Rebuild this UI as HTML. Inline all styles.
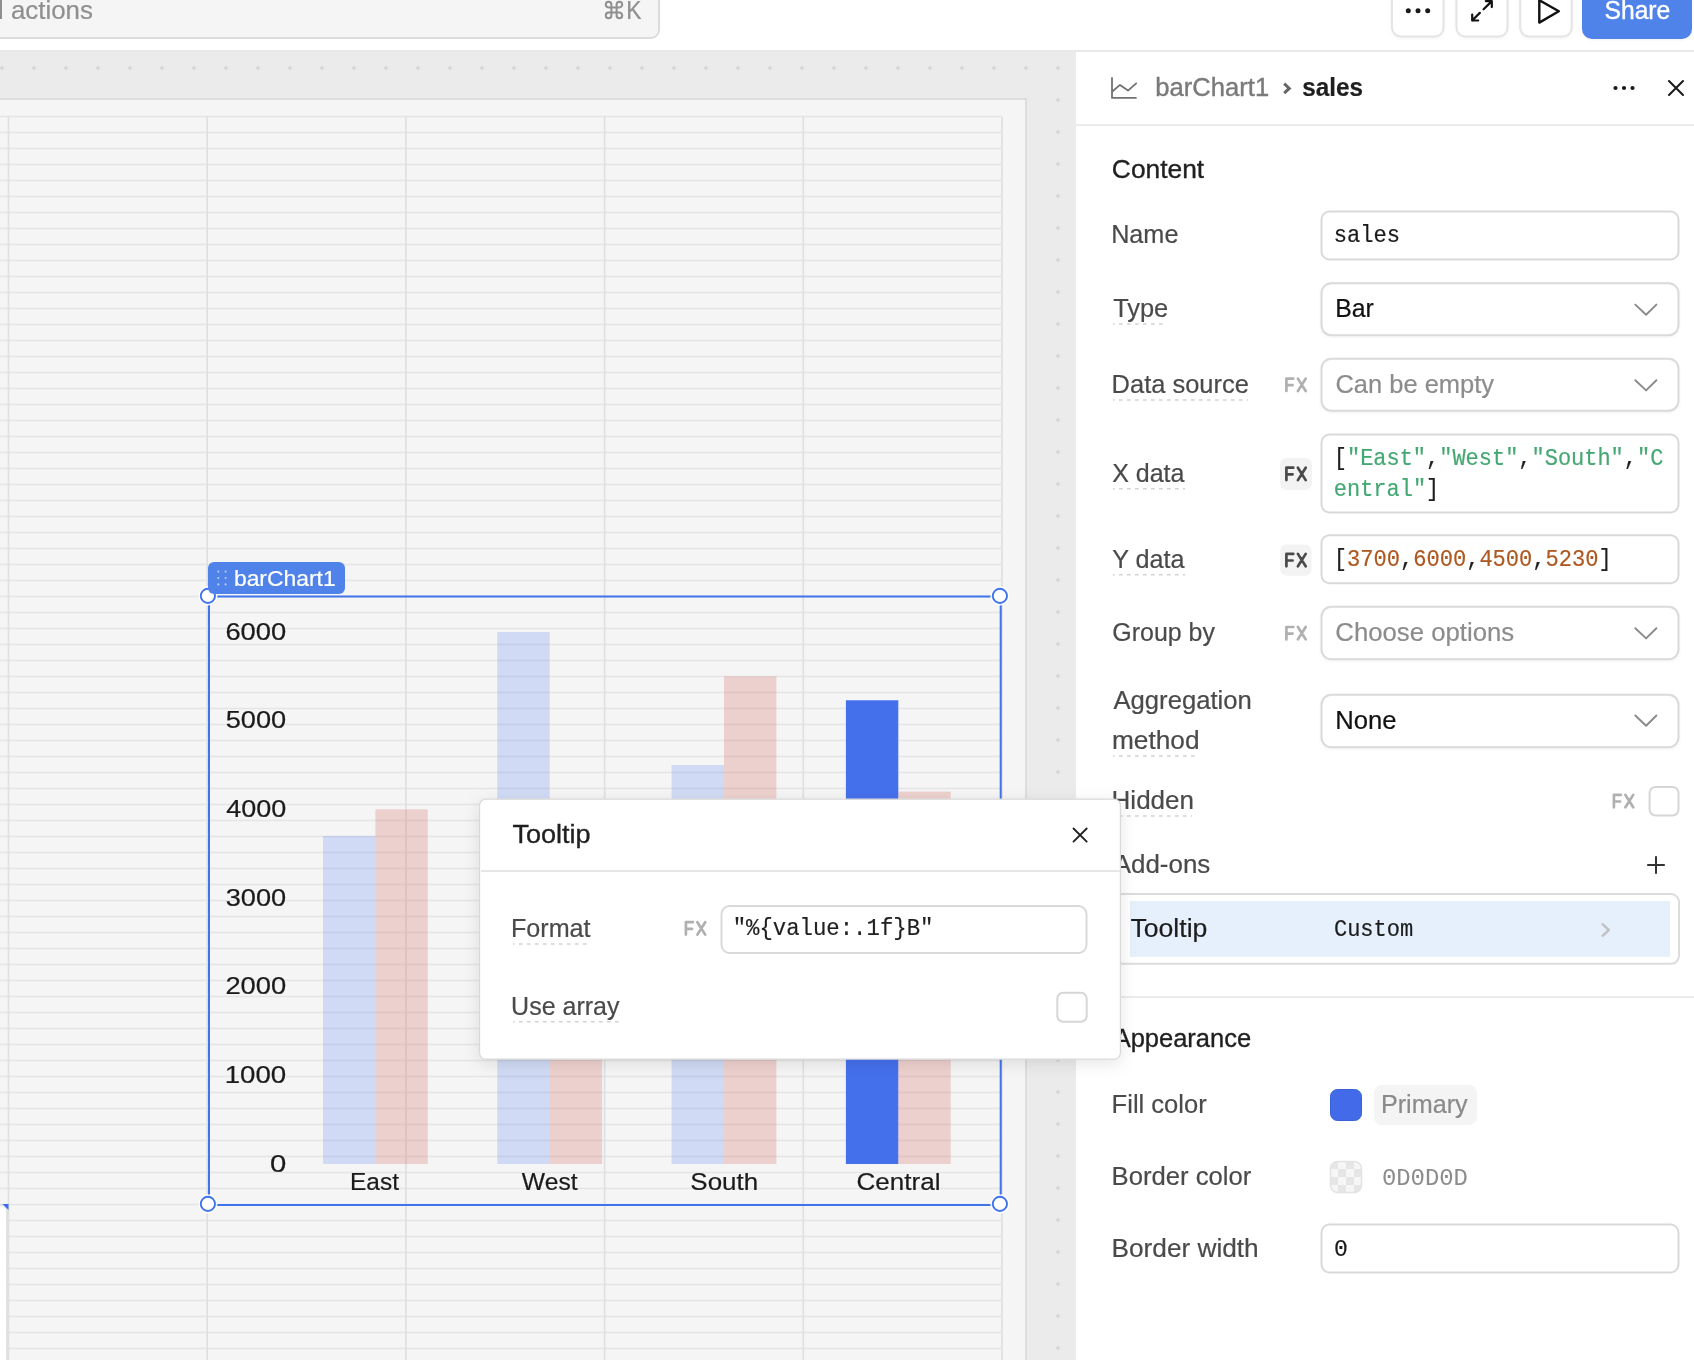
<!DOCTYPE html>
<html><head><meta charset="utf-8"><title>barChart1</title>
<style>html,body{margin:0;padding:0;width:1694px;height:1360px;overflow:hidden;background:#ebebeb;font-family:"Liberation Sans",sans-serif}svg{display:block;will-change:transform}</style>
</head><body>
<svg width="1694" height="1360" viewBox="0 0 1694 1360">
<defs>
<pattern id="dots" x="0" y="0" width="32" height="32" patternUnits="userSpaceOnUse">
<circle cx="2" cy="4" r="2.1" fill="#d9d9d9"/></pattern>
<filter id="pshadow" x="-10%" y="-15%" width="120%" height="135%">
<feDropShadow dx="0" dy="4" stdDeviation="8" flood-color="#000" flood-opacity="0.10"/></filter>
<filter id="bshadow" x="-20%" y="-20%" width="140%" height="150%">
<feDropShadow dx="0" dy="1" stdDeviation="1" flood-color="#000" flood-opacity="0.06"/></filter>
<pattern id="checker" x="1330" y="1161" width="16" height="16" patternUnits="userSpaceOnUse">
<rect width="16" height="16" fill="#f6f6f6"/><rect width="8" height="8" fill="#e6e6e6"/><rect x="8" y="8" width="8" height="8" fill="#e6e6e6"/></pattern>
</defs>
<rect x="0.00" y="0.00" width="1694.00" height="1360.00" rx="0.00" fill="#ebebeb"/>
<rect x="0.00" y="52.00" width="1076.00" height="47.00" rx="0.00" fill="url(#dots)"/>
<rect x="1028.00" y="99.00" width="48.00" height="1261.00" rx="0.00" fill="url(#dots)"/>
<rect x="-10.00" y="99.00" width="1036.00" height="1300.00" rx="0.00" fill="#f5f5f5" stroke="#dddddd" stroke-width="2"/>
<path d="M0 116.50H1002M0 132.50H1002M0 148.50H1002M0 164.50H1002M0 180.50H1002M0 196.50H1002M0 212.50H1002M0 228.50H1002M0 244.50H1002M0 260.50H1002M0 276.50H1002M0 292.50H1002M0 308.50H1002M0 324.50H1002M0 340.50H1002M0 356.50H1002M0 372.50H1002M0 388.50H1002M0 404.50H1002M0 420.50H1002M0 436.50H1002M0 452.50H1002M0 468.50H1002M0 484.50H1002M0 500.50H1002M0 516.50H1002M0 532.50H1002M0 548.50H1002M0 564.50H1002M0 580.50H1002M0 596.50H1002M0 612.50H1002M0 628.50H1002M0 644.50H1002M0 660.50H1002M0 676.50H1002M0 692.50H1002M0 708.50H1002M0 724.50H1002M0 740.50H1002M0 756.50H1002M0 772.50H1002M0 788.50H1002M0 804.50H1002M0 820.50H1002M0 836.50H1002M0 852.50H1002M0 868.50H1002M0 884.50H1002M0 900.50H1002M0 916.50H1002M0 932.50H1002M0 948.50H1002M0 964.50H1002M0 980.50H1002M0 996.50H1002M0 1012.50H1002M0 1028.50H1002M0 1044.50H1002M0 1060.50H1002M0 1076.50H1002M0 1092.50H1002M0 1108.50H1002M0 1124.50H1002M0 1140.50H1002M0 1156.50H1002M0 1172.50H1002M0 1188.50H1002M0 1204.50H1002M0 1220.50H1002M0 1236.50H1002M0 1252.50H1002M0 1268.50H1002M0 1284.50H1002M0 1300.50H1002M0 1316.50H1002M0 1332.50H1002M0 1348.50H1002" stroke="#e5e5e5" stroke-width="1.6" fill="none"/>
<path d="M8.50 116.5V1360M207.20 116.5V1360M405.90 116.5V1360M604.60 116.5V1360M803.30 116.5V1360M1002.00 116.5V1360" stroke="#dfdfdf" stroke-width="1.6" fill="none"/>
<rect x="-20.00" y="1205.00" width="27.00" height="200.00" rx="6.00" fill="#fff" stroke="#dcdcdc" stroke-width="1.6"/>
<path d="M2.5 1204 L8.5 1204 L8.5 1210 Z" fill="#3c6cf0"/>
<rect x="323.00" y="835.93" width="52.40" height="328.07" rx="0.00" fill="#3c6ef0" fill-opacity="0.2"/>
<rect x="375.40" y="809.33" width="52.40" height="354.67" rx="0.00" fill="#d5655a" fill-opacity="0.25"/>
<rect x="497.30" y="632.00" width="52.40" height="532.00" rx="0.00" fill="#3c6ef0" fill-opacity="0.2"/>
<rect x="549.70" y="942.33" width="52.40" height="221.67" rx="0.00" fill="#d5655a" fill-opacity="0.25"/>
<rect x="671.60" y="765.00" width="52.40" height="399.00" rx="0.00" fill="#3c6ef0" fill-opacity="0.2"/>
<rect x="724.00" y="676.33" width="52.40" height="487.67" rx="0.00" fill="#d5655a" fill-opacity="0.25"/>
<rect x="845.90" y="700.27" width="52.40" height="463.73" rx="0.00" fill="#4470ec"/>
<rect x="898.30" y="791.60" width="52.40" height="372.40" rx="0.00" fill="#d5655a" fill-opacity="0.25"/>
<text x="225.41" y="639.60" font-family='"Liberation Sans", sans-serif' font-weight="normal" font-size="24.50" fill="#1a1a1a" textLength="60.86" lengthAdjust="spacingAndGlyphs" stroke="#1a1a1a" stroke-width="0.2" paint-order="stroke">6000</text>
<text x="225.71" y="728.30" font-family='"Liberation Sans", sans-serif' font-weight="normal" font-size="24.50" fill="#1a1a1a" textLength="60.55" lengthAdjust="spacingAndGlyphs" stroke="#1a1a1a" stroke-width="0.2" paint-order="stroke">5000</text>
<text x="226.18" y="817.00" font-family='"Liberation Sans", sans-serif' font-weight="normal" font-size="24.50" fill="#1a1a1a" textLength="60.07" lengthAdjust="spacingAndGlyphs" stroke="#1a1a1a" stroke-width="0.2" paint-order="stroke">4000</text>
<text x="225.76" y="905.70" font-family='"Liberation Sans", sans-serif' font-weight="normal" font-size="24.50" fill="#1a1a1a" textLength="60.50" lengthAdjust="spacingAndGlyphs" stroke="#1a1a1a" stroke-width="0.2" paint-order="stroke">3000</text>
<text x="225.42" y="994.40" font-family='"Liberation Sans", sans-serif' font-weight="normal" font-size="24.50" fill="#1a1a1a" textLength="60.84" lengthAdjust="spacingAndGlyphs" stroke="#1a1a1a" stroke-width="0.2" paint-order="stroke">2000</text>
<text x="224.69" y="1083.10" font-family='"Liberation Sans", sans-serif' font-weight="normal" font-size="24.50" fill="#1a1a1a" textLength="61.59" lengthAdjust="spacingAndGlyphs" stroke="#1a1a1a" stroke-width="0.2" paint-order="stroke">1000</text>
<text x="270.06" y="1171.80" font-family='"Liberation Sans", sans-serif' font-weight="normal" font-size="24.50" fill="#1a1a1a" textLength="16.29" lengthAdjust="spacingAndGlyphs" stroke="#1a1a1a" stroke-width="0.2" paint-order="stroke">0</text>
<text x="350.05" y="1189.50" font-family='"Liberation Sans", sans-serif' font-weight="normal" font-size="24.50" fill="#1a1a1a" textLength="48.88" lengthAdjust="spacingAndGlyphs" stroke="#1a1a1a" stroke-width="0.2" paint-order="stroke">East</text>
<text x="521.89" y="1189.50" font-family='"Liberation Sans", sans-serif' font-weight="normal" font-size="24.50" fill="#1a1a1a" textLength="55.69" lengthAdjust="spacingAndGlyphs" stroke="#1a1a1a" stroke-width="0.2" paint-order="stroke">West</text>
<text x="690.37" y="1189.50" font-family='"Liberation Sans", sans-serif' font-weight="normal" font-size="24.50" fill="#1a1a1a" textLength="67.76" lengthAdjust="spacingAndGlyphs" stroke="#1a1a1a" stroke-width="0.2" paint-order="stroke">South</text>
<text x="856.58" y="1189.50" font-family='"Liberation Sans", sans-serif' font-weight="normal" font-size="24.50" fill="#1a1a1a" textLength="83.86" lengthAdjust="spacingAndGlyphs" stroke="#1a1a1a" stroke-width="0.2" paint-order="stroke">Central</text>
<rect x="209.00" y="596.50" width="791.70" height="608.50" rx="0.00" fill="none" stroke="#3f74ea" stroke-width="2"/>
<circle cx="207.9" cy="595.9" r="7.1" fill="#fff" stroke="#fff" stroke-width="5" stroke-opacity="0.9"/>
<circle cx="207.9" cy="595.9" r="7.1" fill="#fff" stroke="#3f74ea" stroke-width="1.9"/>
<circle cx="999.9" cy="595.9" r="7.1" fill="#fff" stroke="#fff" stroke-width="5" stroke-opacity="0.9"/>
<circle cx="999.9" cy="595.9" r="7.1" fill="#fff" stroke="#3f74ea" stroke-width="1.9"/>
<circle cx="207.9" cy="1203.9" r="7.1" fill="#fff" stroke="#fff" stroke-width="5" stroke-opacity="0.9"/>
<circle cx="207.9" cy="1203.9" r="7.1" fill="#fff" stroke="#3f74ea" stroke-width="1.9"/>
<circle cx="999.9" cy="1203.9" r="7.1" fill="#fff" stroke="#fff" stroke-width="5" stroke-opacity="0.9"/>
<circle cx="999.9" cy="1203.9" r="7.1" fill="#fff" stroke="#3f74ea" stroke-width="1.9"/>
<rect x="208.00" y="562.00" width="137.00" height="32.00" rx="6.00" fill="#5083ea"/>
<circle cx="218.3" cy="571.6" r="1.05" fill="#fff" fill-opacity="0.6"/>
<circle cx="218.3" cy="578" r="1.05" fill="#fff" fill-opacity="0.6"/>
<circle cx="218.3" cy="584.4" r="1.05" fill="#fff" fill-opacity="0.6"/>
<circle cx="225.6" cy="571.6" r="1.05" fill="#fff" fill-opacity="0.6"/>
<circle cx="225.6" cy="578" r="1.05" fill="#fff" fill-opacity="0.6"/>
<circle cx="225.6" cy="584.4" r="1.05" fill="#fff" fill-opacity="0.6"/>
<text x="233.92" y="585.70" font-family='"Liberation Sans", sans-serif' font-weight="normal" font-size="22.00" fill="#ffffff" textLength="101.79" lengthAdjust="spacingAndGlyphs" stroke="#ffffff" stroke-width="0.2" paint-order="stroke">barChart1</text>
<rect x="0.00" y="0.00" width="1694.00" height="50.00" rx="0.00" fill="#fff"/>
<rect x="0.00" y="50.00" width="1694.00" height="2.00" rx="0.00" fill="#e8e8e8"/>
<rect x="-20.00" y="-20.00" width="679.00" height="58.00" rx="8.00" fill="#f5f5f5" stroke="#dcdcdc" stroke-width="2"/>
<text x="10.90" y="19.00" font-family='"Liberation Sans", sans-serif' font-weight="normal" font-size="25.50" fill="#8f8f8f" textLength="82.04" lengthAdjust="spacingAndGlyphs" stroke="#8f8f8f" stroke-width="0.2" paint-order="stroke">actions</text>
<rect x="0.00" y="0.00" width="2.00" height="19.00" rx="0.00" fill="#8f8f8f"/>
<path d="M611.4 7.4 V4.6 A2.8 2.8 0 1 0 608.6 7.4 H619.4 A2.8 2.8 0 1 0 616.6 4.6 V15.4 A2.8 2.8 0 1 0 619.4 12.6 H608.6 A2.8 2.8 0 1 0 611.4 15.4 Z" fill="none" stroke="#8f8f8f" stroke-width="2" stroke-linecap="round" stroke-linejoin="round"/>
<text x="626.13" y="18.90" font-family='"Liberation Sans", sans-serif' font-weight="normal" font-size="25.50" fill="#8f8f8f" textLength="15.23" lengthAdjust="spacingAndGlyphs" stroke="#8f8f8f" stroke-width="0.2" paint-order="stroke">K</text>
<rect x="1392.00" y="-19.00" width="51.50" height="55.50" rx="9.00" fill="#fff" stroke="#e4e4e4" stroke-width="2" filter="url(#bshadow)"/>
<rect x="1456.50" y="-19.00" width="51.00" height="55.50" rx="9.00" fill="#fff" stroke="#e4e4e4" stroke-width="2" filter="url(#bshadow)"/>
<rect x="1520.20" y="-19.00" width="51.50" height="55.50" rx="9.00" fill="#fff" stroke="#e4e4e4" stroke-width="2" filter="url(#bshadow)"/>
<circle cx="1408.3" cy="10.8" r="2.5" fill="#1a1a1a"/>
<circle cx="1418" cy="10.8" r="2.5" fill="#1a1a1a"/>
<circle cx="1427.7" cy="10.8" r="2.5" fill="#1a1a1a"/>
<path d="M1479.8 12.9 L1472.2 20.5 M1472.2 14.6 V20.5 H1478.2 M1483.6 9.3 L1491.8 1.1 M1485.8 1.1 H1491.8 V7.1" fill="none" stroke="#111" stroke-width="2.2" stroke-linecap="round" stroke-linejoin="round"/>
<path d="M1539.3 0.2 V22.6 L1558.8 11.2 Z" fill="none" stroke="#111" stroke-width="2.4" stroke-linecap="round" stroke-linejoin="round"/>
<rect x="1582.00" y="-20.00" width="110.00" height="59.00" rx="10.00" fill="#4f83ea" filter="url(#bshadow)"/>
<text x="1604.48" y="19.20" font-family='"Liberation Sans", sans-serif' font-weight="normal" font-size="25.00" fill="#ffffff" textLength="65.82" lengthAdjust="spacingAndGlyphs" stroke="#ffffff" stroke-width="0.35" paint-order="stroke">Share</text>
<rect x="1076.00" y="52.00" width="618.00" height="1308.00" rx="0.00" fill="#fff"/>
<rect x="1076.00" y="124.00" width="618.00" height="2.00" rx="0.00" fill="#ebebeb"/>
<path d="M1112 78 V97.9 H1135.9 M1112.6 91.2 L1120 84.9 L1128 90.6 L1136.2 83.4" fill="none" stroke="#717171" stroke-width="1.8" stroke-linecap="round" stroke-linejoin="round"/>
<text x="1155.35" y="96.00" font-family='"Liberation Sans", sans-serif' font-weight="normal" font-size="25.50" fill="#7a7a7a" textLength="113.90" lengthAdjust="spacingAndGlyphs" stroke="#7a7a7a" stroke-width="0.4" paint-order="stroke">barChart1</text>
<path d="M1284.2 83.6 L1289.3 88.4 L1284.2 93.2" fill="none" stroke="#666666" stroke-width="3" stroke-linecap="butt" stroke-linejoin="miter"/>
<text x="1302.15" y="96.00" font-family='"Liberation Sans", sans-serif' font-weight="bold" font-size="25.50" fill="#1f1f1f" textLength="60.85" lengthAdjust="spacingAndGlyphs" stroke="#1f1f1f" stroke-width="0.2" paint-order="stroke">sales</text>
<circle cx="1615.5" cy="88" r="2.1" fill="#1a1a1a"/>
<circle cx="1624" cy="88" r="2.1" fill="#1a1a1a"/>
<circle cx="1632.5" cy="88" r="2.1" fill="#1a1a1a"/>
<path d="M1669 81 L1683 95 M1683 81 L1669 95" fill="none" stroke="#1a1a1a" stroke-width="2" stroke-linecap="round" stroke-linejoin="round"/>
<text x="1111.86" y="178.10" font-family='"Liberation Sans", sans-serif' font-weight="normal" font-size="25.50" fill="#1f1f1f" textLength="92.33" lengthAdjust="spacingAndGlyphs" stroke="#1f1f1f" stroke-width="0.35" paint-order="stroke">Content</text>
<text x="1111.13" y="243.00" font-family='"Liberation Sans", sans-serif' font-weight="normal" font-size="25.50" fill="#4a4a4a" textLength="67.29" lengthAdjust="spacingAndGlyphs" stroke="#4a4a4a" stroke-width="0.2" paint-order="stroke">Name</text>
<rect x="1321.50" y="211.50" width="357.00" height="48.00" rx="8.00" fill="#fff" stroke="#d9d9d9" stroke-width="2"/>
<text x="1333.80" y="241.80" font-family='"Liberation Mono", monospace' font-weight="normal" font-size="24.00" fill="#1a1a1a" textLength="66.33" lengthAdjust="spacingAndGlyphs" stroke="#1a1a1a" stroke-width="0.2" paint-order="stroke">sales</text>
<text x="1113.14" y="317.20" font-family='"Liberation Sans", sans-serif' font-weight="normal" font-size="25.50" fill="#4a4a4a" textLength="55.16" lengthAdjust="spacingAndGlyphs" stroke="#4a4a4a" stroke-width="0.2" paint-order="stroke">Type</text>
<line x1="1113.0" y1="324.0" x2="1167.0" y2="324.0" stroke="#d2d2d2" stroke-width="1.5" stroke-dasharray="3.6 4.4" stroke-dashoffset="2"/>
<rect x="1321.50" y="283.20" width="357.00" height="52.00" rx="10.00" fill="#fff" stroke="#dadada" stroke-width="2" filter="url(#bshadow)"/>
<text x="1335.16" y="316.80" font-family='"Liberation Sans", sans-serif' font-weight="normal" font-size="25.00" fill="#111" textLength="38.65" lengthAdjust="spacingAndGlyphs" stroke="#111" stroke-width="0.2" paint-order="stroke">Bar</text>
<path d="M1635.3 304.6 L1646.1 314.8 L1656.4 304.6" fill="none" stroke="#8a8a8a" stroke-width="1.9" stroke-linecap="round" stroke-linejoin="round"/>
<text x="1111.61" y="393.10" font-family='"Liberation Sans", sans-serif' font-weight="normal" font-size="25.50" fill="#4a4a4a" textLength="137.32" lengthAdjust="spacingAndGlyphs" stroke="#4a4a4a" stroke-width="0.2" paint-order="stroke">Data source</text>
<line x1="1113.0" y1="400.0" x2="1248.0" y2="400.0" stroke="#d2d2d2" stroke-width="1.5" stroke-dasharray="3.6 4.4" stroke-dashoffset="2"/>
<path d="M1286.4 391.0 V378.6 H1293.3 M1286.4 385.2 H1292.6 M1297.9 378.6 L1305.7 391.0 M1305.7 378.6 L1297.9 391.0" fill="none" stroke="#b0b0b0" stroke-width="2.7" stroke-linecap="round" stroke-linejoin="round"/>
<rect x="1321.50" y="358.70" width="357.00" height="52.00" rx="10.00" fill="#fff" stroke="#dadada" stroke-width="2" filter="url(#bshadow)"/>
<text x="1335.41" y="393.10" font-family='"Liberation Sans", sans-serif' font-weight="normal" font-size="25.50" fill="#8c8c8c" textLength="158.64" lengthAdjust="spacingAndGlyphs" stroke="#8c8c8c" stroke-width="0.2" paint-order="stroke">Can be empty</text>
<path d="M1635.3 380.2 L1646.1 390.4 L1656.4 380.2" fill="none" stroke="#8a8a8a" stroke-width="1.9" stroke-linecap="round" stroke-linejoin="round"/>
<text x="1112.14" y="481.80" font-family='"Liberation Sans", sans-serif' font-weight="normal" font-size="25.50" fill="#4a4a4a" textLength="72.36" lengthAdjust="spacingAndGlyphs" stroke="#4a4a4a" stroke-width="0.2" paint-order="stroke">X data</text>
<line x1="1113.0" y1="488.8" x2="1185.0" y2="488.8" stroke="#d2d2d2" stroke-width="1.5" stroke-dasharray="3.6 4.4" stroke-dashoffset="2"/>
<rect x="1280.00" y="458.00" width="32.00" height="32.00" rx="6.50" fill="#f3f3f3"/>
<path d="M1286.4 480.1 V467.7 H1293.3 M1286.4 474.3 H1292.6 M1297.9 467.7 L1305.7 480.1 M1305.7 467.7 L1297.9 480.1" fill="none" stroke="#4a4a4a" stroke-width="2.7" stroke-linecap="round" stroke-linejoin="round"/>
<rect x="1321.50" y="434.50" width="357.00" height="78.00" rx="8.00" fill="#fff" stroke="#d9d9d9" stroke-width="2"/>
<text x="1333.80" y="465.10" font-family='"Liberation Mono", monospace' font-size="24.00" fill="#1f1f1f" stroke="#1f1f1f" stroke-width="0.2" textLength="13.18" lengthAdjust="spacingAndGlyphs">[</text>
<text x="1346.98" y="465.10" font-family='"Liberation Mono", monospace' font-size="24.00" fill="#44a872" stroke="#44a872" stroke-width="0.2" textLength="79.09" lengthAdjust="spacingAndGlyphs">"East"</text>
<text x="1426.07" y="465.10" font-family='"Liberation Mono", monospace' font-size="24.00" fill="#1f1f1f" stroke="#1f1f1f" stroke-width="0.2" textLength="13.18" lengthAdjust="spacingAndGlyphs">,</text>
<text x="1439.25" y="465.10" font-family='"Liberation Mono", monospace' font-size="24.00" fill="#44a872" stroke="#44a872" stroke-width="0.2" textLength="79.09" lengthAdjust="spacingAndGlyphs">"West"</text>
<text x="1518.34" y="465.10" font-family='"Liberation Mono", monospace' font-size="24.00" fill="#1f1f1f" stroke="#1f1f1f" stroke-width="0.2" textLength="13.18" lengthAdjust="spacingAndGlyphs">,</text>
<text x="1531.52" y="465.10" font-family='"Liberation Mono", monospace' font-size="24.00" fill="#44a872" stroke="#44a872" stroke-width="0.2" textLength="92.27" lengthAdjust="spacingAndGlyphs">"South"</text>
<text x="1623.79" y="465.10" font-family='"Liberation Mono", monospace' font-size="24.00" fill="#1f1f1f" stroke="#1f1f1f" stroke-width="0.2" textLength="13.18" lengthAdjust="spacingAndGlyphs">,</text>
<text x="1636.97" y="465.10" font-family='"Liberation Mono", monospace' font-size="24.00" fill="#44a872" stroke="#44a872" stroke-width="0.2" textLength="26.36" lengthAdjust="spacingAndGlyphs">"C</text>
<text x="1333.80" y="496.10" font-family='"Liberation Mono", monospace' font-size="24.00" fill="#44a872" stroke="#44a872" stroke-width="0.2" textLength="92.27" lengthAdjust="spacingAndGlyphs">entral"</text>
<text x="1426.07" y="496.10" font-family='"Liberation Mono", monospace' font-size="24.00" fill="#1f1f1f" stroke="#1f1f1f" stroke-width="0.2" textLength="13.18" lengthAdjust="spacingAndGlyphs">]</text>
<text x="1112.15" y="567.70" font-family='"Liberation Sans", sans-serif' font-weight="normal" font-size="25.50" fill="#4a4a4a" textLength="72.35" lengthAdjust="spacingAndGlyphs" stroke="#4a4a4a" stroke-width="0.2" paint-order="stroke">Y data</text>
<line x1="1113.0" y1="574.8" x2="1185.0" y2="574.8" stroke="#d2d2d2" stroke-width="1.5" stroke-dasharray="3.6 4.4" stroke-dashoffset="2"/>
<rect x="1280.20" y="544.40" width="31.30" height="31.30" rx="6.50" fill="#f3f3f3"/>
<path d="M1286.4 566.3 V553.9 H1293.3 M1286.4 560.5 H1292.6 M1297.9 553.9 L1305.7 566.3 M1305.7 553.9 L1297.9 566.3" fill="none" stroke="#4a4a4a" stroke-width="2.7" stroke-linecap="round" stroke-linejoin="round"/>
<rect x="1321.50" y="535.20" width="357.00" height="48.00" rx="8.00" fill="#fff" stroke="#d9d9d9" stroke-width="2"/>
<text x="1333.78" y="566.20" font-family='"Liberation Mono", monospace' font-size="24.00" fill="#1f1f1f" stroke="#1f1f1f" stroke-width="0.2" textLength="13.24" lengthAdjust="spacingAndGlyphs">[</text>
<text x="1347.02" y="566.20" font-family='"Liberation Mono", monospace' font-size="24.00" fill="#ae5820" stroke="#ae5820" stroke-width="0.2" textLength="52.94" lengthAdjust="spacingAndGlyphs">3700</text>
<text x="1399.96" y="566.20" font-family='"Liberation Mono", monospace' font-size="24.00" fill="#1f1f1f" stroke="#1f1f1f" stroke-width="0.2" textLength="13.24" lengthAdjust="spacingAndGlyphs">,</text>
<text x="1413.20" y="566.20" font-family='"Liberation Mono", monospace' font-size="24.00" fill="#ae5820" stroke="#ae5820" stroke-width="0.2" textLength="52.94" lengthAdjust="spacingAndGlyphs">6000</text>
<text x="1466.14" y="566.20" font-family='"Liberation Mono", monospace' font-size="24.00" fill="#1f1f1f" stroke="#1f1f1f" stroke-width="0.2" textLength="13.24" lengthAdjust="spacingAndGlyphs">,</text>
<text x="1479.38" y="566.20" font-family='"Liberation Mono", monospace' font-size="24.00" fill="#ae5820" stroke="#ae5820" stroke-width="0.2" textLength="52.94" lengthAdjust="spacingAndGlyphs">4500</text>
<text x="1532.32" y="566.20" font-family='"Liberation Mono", monospace' font-size="24.00" fill="#1f1f1f" stroke="#1f1f1f" stroke-width="0.2" textLength="13.24" lengthAdjust="spacingAndGlyphs">,</text>
<text x="1545.56" y="566.20" font-family='"Liberation Mono", monospace' font-size="24.00" fill="#ae5820" stroke="#ae5820" stroke-width="0.2" textLength="52.94" lengthAdjust="spacingAndGlyphs">5230</text>
<text x="1598.50" y="566.20" font-family='"Liberation Mono", monospace' font-size="24.00" fill="#1f1f1f" stroke="#1f1f1f" stroke-width="0.2" textLength="13.24" lengthAdjust="spacingAndGlyphs">]</text>
<text x="1112.35" y="640.80" font-family='"Liberation Sans", sans-serif' font-weight="normal" font-size="25.50" fill="#4a4a4a" textLength="102.60" lengthAdjust="spacingAndGlyphs" stroke="#4a4a4a" stroke-width="0.2" paint-order="stroke">Group by</text>
<path d="M1286.4 639.4 V627.0 H1293.3 M1286.4 633.6 H1292.6 M1297.9 627.0 L1305.7 639.4 M1305.7 627.0 L1297.9 639.4" fill="none" stroke="#b0b0b0" stroke-width="2.7" stroke-linecap="round" stroke-linejoin="round"/>
<rect x="1321.50" y="606.80" width="357.00" height="52.50" rx="10.00" fill="#fff" stroke="#dadada" stroke-width="2" filter="url(#bshadow)"/>
<text x="1335.39" y="640.80" font-family='"Liberation Sans", sans-serif' font-weight="normal" font-size="25.50" fill="#8c8c8c" textLength="178.74" lengthAdjust="spacingAndGlyphs" stroke="#8c8c8c" stroke-width="0.2" paint-order="stroke">Choose options</text>
<path d="M1635.3 628.2 L1646.1 638.4 L1656.4 628.2" fill="none" stroke="#8a8a8a" stroke-width="1.9" stroke-linecap="round" stroke-linejoin="round"/>
<text x="1113.45" y="709.30" font-family='"Liberation Sans", sans-serif' font-weight="normal" font-size="25.50" fill="#4a4a4a" textLength="138.42" lengthAdjust="spacingAndGlyphs" stroke="#4a4a4a" stroke-width="0.2" paint-order="stroke">Aggregation</text>
<text x="1111.96" y="749.10" font-family='"Liberation Sans", sans-serif' font-weight="normal" font-size="25.50" fill="#4a4a4a" textLength="87.64" lengthAdjust="spacingAndGlyphs" stroke="#4a4a4a" stroke-width="0.2" paint-order="stroke">method</text>
<line x1="1113.0" y1="756.0" x2="1198.0" y2="756.0" stroke="#d2d2d2" stroke-width="1.5" stroke-dasharray="3.6 4.4" stroke-dashoffset="2"/>
<rect x="1321.50" y="694.80" width="357.00" height="52.50" rx="10.00" fill="#fff" stroke="#dadada" stroke-width="2" filter="url(#bshadow)"/>
<text x="1335.20" y="729.30" font-family='"Liberation Sans", sans-serif' font-weight="normal" font-size="25.00" fill="#111" textLength="61.35" lengthAdjust="spacingAndGlyphs" stroke="#111" stroke-width="0.2" paint-order="stroke">None</text>
<path d="M1635.3 715.5 L1646.1 725.7 L1656.4 715.5" fill="none" stroke="#8a8a8a" stroke-width="1.9" stroke-linecap="round" stroke-linejoin="round"/>
<text x="1111.56" y="808.90" font-family='"Liberation Sans", sans-serif' font-weight="normal" font-size="25.50" fill="#4a4a4a" textLength="82.53" lengthAdjust="spacingAndGlyphs" stroke="#4a4a4a" stroke-width="0.2" paint-order="stroke">Hidden</text>
<line x1="1113.0" y1="816.0" x2="1192.0" y2="816.0" stroke="#d2d2d2" stroke-width="1.5" stroke-dasharray="3.6 4.4" stroke-dashoffset="2"/>
<path d="M1613.9 807.3 V794.9 H1620.8 M1613.9 801.5 H1620.1 M1625.4 794.9 L1633.2 807.3 M1633.2 794.9 L1625.4 807.3" fill="none" stroke="#b0b0b0" stroke-width="2.7" stroke-linecap="round" stroke-linejoin="round"/>
<rect x="1649.60" y="787.00" width="28.90" height="28.50" rx="6.00" fill="#fff" stroke="#d6d6d6" stroke-width="2"/>
<text x="1113.65" y="872.80" font-family='"Liberation Sans", sans-serif' font-weight="normal" font-size="25.50" fill="#4a4a4a" textLength="96.69" lengthAdjust="spacingAndGlyphs" stroke="#4a4a4a" stroke-width="0.2" paint-order="stroke">Add-ons</text>
<path d="M1647.2 864.9 H1664.8 M1656 856.3 V873.7" fill="none" stroke="#333" stroke-width="2" stroke-linecap="butt" stroke-linejoin="round"/>
<rect x="1114.00" y="894.00" width="565.00" height="69.80" rx="8.00" fill="#fff" stroke="#dcdcdc" stroke-width="2"/>
<rect x="1130.00" y="901.00" width="540.00" height="55.80" rx="0.00" fill="#e6effc"/>
<text x="1130.42" y="937.00" font-family='"Liberation Sans", sans-serif' font-weight="normal" font-size="25.50" fill="#1c1c1c" textLength="76.95" lengthAdjust="spacingAndGlyphs" stroke="#1c1c1c" stroke-width="0.2" paint-order="stroke">Tooltip</text>
<text x="1333.99" y="936.00" font-family='"Liberation Mono", monospace' font-weight="normal" font-size="24.00" fill="#1c1c1c" textLength="79.14" lengthAdjust="spacingAndGlyphs" stroke="#1c1c1c" stroke-width="0.2" paint-order="stroke">Custom</text>
<path d="M1602.6 924.2 L1608.8 930 L1602.6 935.8" fill="none" stroke="#c2c2c2" stroke-width="2.4" stroke-linecap="round" stroke-linejoin="round"/>
<rect x="1076.00" y="996.00" width="618.00" height="2.00" rx="0.00" fill="#ebebeb"/>
<text x="1113.65" y="1046.60" font-family='"Liberation Sans", sans-serif' font-weight="normal" font-size="25.50" fill="#1f1f1f" textLength="137.48" lengthAdjust="spacingAndGlyphs" stroke="#1f1f1f" stroke-width="0.35" paint-order="stroke">Appearance</text>
<text x="1111.60" y="1113.00" font-family='"Liberation Sans", sans-serif' font-weight="normal" font-size="25.50" fill="#4a4a4a" textLength="95.12" lengthAdjust="spacingAndGlyphs" stroke="#4a4a4a" stroke-width="0.2" paint-order="stroke">Fill color</text>
<rect x="1330.50" y="1089.50" width="31.00" height="31.00" rx="7.00" fill="#436be9" stroke="#3a5fd6" stroke-width="1"/>
<rect x="1374.00" y="1085.00" width="103.00" height="40.00" rx="8.00" fill="#f4f4f4"/>
<text x="1380.93" y="1113.00" font-family='"Liberation Sans", sans-serif' font-weight="normal" font-size="25.50" fill="#8a8a8a" textLength="86.71" lengthAdjust="spacingAndGlyphs" stroke="#8a8a8a" stroke-width="0.2" paint-order="stroke">Primary</text>
<text x="1111.59" y="1184.70" font-family='"Liberation Sans", sans-serif' font-weight="normal" font-size="25.50" fill="#4a4a4a" textLength="139.83" lengthAdjust="spacingAndGlyphs" stroke="#4a4a4a" stroke-width="0.2" paint-order="stroke">Border color</text>
<rect x="1330.50" y="1161.50" width="31.00" height="31.00" rx="7.00" fill="url(#checker)" stroke="#e3e3e3" stroke-width="1.5"/>
<text x="1381.95" y="1184.70" font-family='"Liberation Mono", monospace' font-weight="normal" font-size="24.00" fill="#8c8c8c" textLength="85.96" lengthAdjust="spacingAndGlyphs" stroke="#8c8c8c" stroke-width="0.05" paint-order="stroke">0D0D0D</text>
<text x="1111.55" y="1256.50" font-family='"Liberation Sans", sans-serif' font-weight="normal" font-size="25.50" fill="#4a4a4a" textLength="147.15" lengthAdjust="spacingAndGlyphs" stroke="#4a4a4a" stroke-width="0.2" paint-order="stroke">Border width</text>
<rect x="1321.50" y="1224.50" width="357.00" height="48.00" rx="8.00" fill="#fff" stroke="#d9d9d9" stroke-width="2"/>
<text x="1334.11" y="1255.50" font-family='"Liberation Mono", monospace' font-weight="normal" font-size="24.00" fill="#1a1a1a" textLength="13.81" lengthAdjust="spacingAndGlyphs" stroke="#1a1a1a" stroke-width="0.2" paint-order="stroke">0</text>
<g filter="url(#pshadow)">
<rect x="479.60" y="799.20" width="640.80" height="259.90" rx="6.00" fill="#fff" stroke="#d9d9d9" stroke-width="1.2"/>
</g>
<rect x="481.00" y="870.00" width="639.00" height="2.00" rx="0.00" fill="#e6e6e6"/>
<text x="512.41" y="843.10" font-family='"Liberation Sans", sans-serif' font-weight="normal" font-size="25.50" fill="#1f1f1f" textLength="78.28" lengthAdjust="spacingAndGlyphs" stroke="#1f1f1f" stroke-width="0.35" paint-order="stroke">Tooltip</text>
<path d="M1073 828 L1087.2 842.2 M1087.2 828 L1073 842.2" fill="none" stroke="#1f1f1f" stroke-width="1.8" stroke-linecap="butt" stroke-linejoin="round"/>
<text x="510.94" y="937.00" font-family='"Liberation Sans", sans-serif' font-weight="normal" font-size="25.50" fill="#4a4a4a" textLength="79.65" lengthAdjust="spacingAndGlyphs" stroke="#4a4a4a" stroke-width="0.2" paint-order="stroke">Format</text>
<line x1="513.0" y1="944.0" x2="591.0" y2="944.0" stroke="#d2d2d2" stroke-width="1.5" stroke-dasharray="3.6 4.4" stroke-dashoffset="2"/>
<path d="M685.9 934.6 V922.2 H692.8 M685.9 928.8 H692.1 M697.4 922.2 L705.2 934.6 M705.2 922.2 L697.4 934.6" fill="none" stroke="#b0b0b0" stroke-width="2.7" stroke-linecap="round" stroke-linejoin="round"/>
<rect x="721.50" y="906.00" width="365.00" height="47.00" rx="8.00" fill="#fff" stroke="#d9d9d9" stroke-width="2"/>
<text x="732.68" y="935.40" font-family='"Liberation Mono", monospace' font-weight="normal" font-size="24.00" fill="#1f1f1f" textLength="200.75" lengthAdjust="spacingAndGlyphs" stroke="#1f1f1f" stroke-width="0.2" paint-order="stroke">"%{value:.1f}B"</text>
<text x="511.07" y="1015.00" font-family='"Liberation Sans", sans-serif' font-weight="normal" font-size="25.50" fill="#4a4a4a" textLength="108.48" lengthAdjust="spacingAndGlyphs" stroke="#4a4a4a" stroke-width="0.2" paint-order="stroke">Use array</text>
<line x1="513.0" y1="1021.8" x2="620.0" y2="1021.8" stroke="#d2d2d2" stroke-width="1.5" stroke-dasharray="3.6 4.4" stroke-dashoffset="2"/>
<rect x="1057.30" y="992.80" width="29.40" height="29.00" rx="6.00" fill="#fff" stroke="#d6d6d6" stroke-width="2"/>
</svg>
</body></html>
